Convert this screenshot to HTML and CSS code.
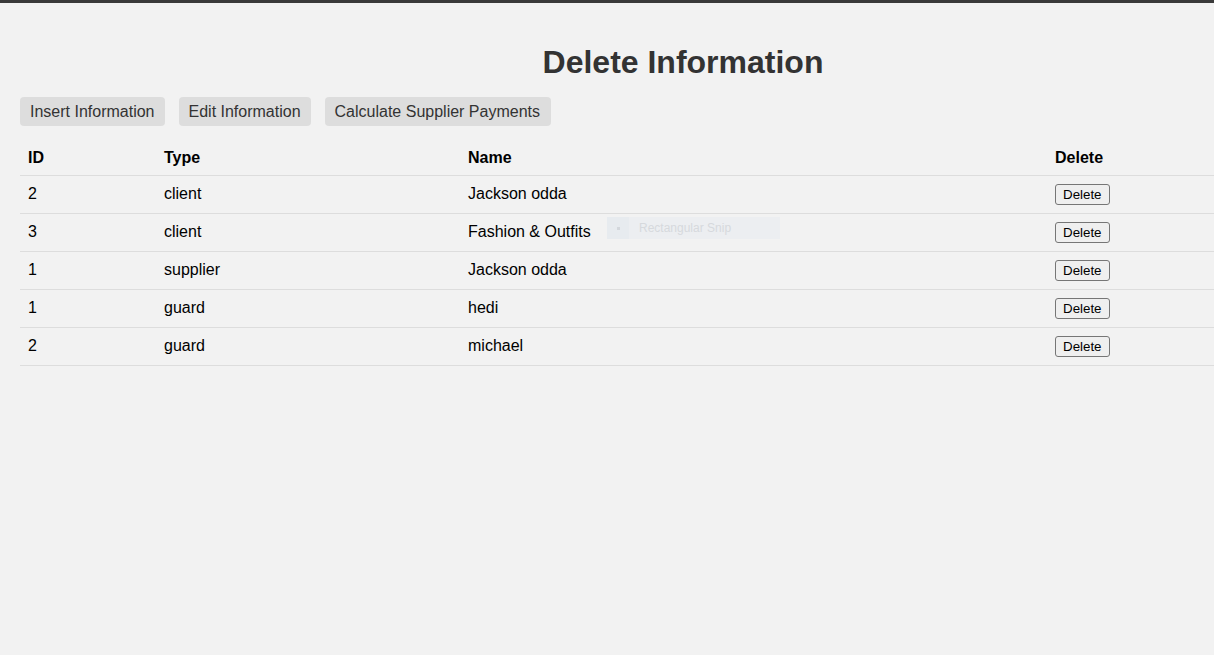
FILE: index.html
```html
<!DOCTYPE html>
<html lang="en">
<head>
<meta charset="utf-8">
<title>Delete Information</title>
<link rel="stylesheet" href="styles.css">
</head>
<body>
<div class="topbar"></div>
<div class="page">
  <h1 class="title">Delete Information</h1>
  <nav class="nav">
    <a class="nav-btn" href="#">Insert Information</a>
    <a class="nav-btn" href="#">Edit Information</a>
    <a class="nav-btn nav-wide" href="#">Calculate Supplier Payments</a>
  </nav>
  <table class="data">
    <colgroup>
      <col class="c-id">
      <col class="c-type">
      <col class="c-name">
      <col class="c-del">
    </colgroup>
    <thead>
      <tr><th>ID</th><th>Type</th><th>Name</th><th>Delete</th></tr>
    </thead>
    <tbody>
      <tr><td>2</td><td>client</td><td>Jackson odda</td><td class="act"><button class="del">Delete</button></td></tr>
      <tr><td>3</td><td>client</td><td>Fashion &amp; Outfits</td><td class="act"><button class="del">Delete</button></td></tr>
      <tr><td>1</td><td>supplier</td><td>Jackson odda</td><td class="act"><button class="del">Delete</button></td></tr>
      <tr><td>1</td><td>guard</td><td>hedi</td><td class="act"><button class="del">Delete</button></td></tr>
      <tr><td>2</td><td>guard</td><td>michael</td><td class="act"><button class="del">Delete</button></td></tr>
    </tbody>
  </table>
</div>
<div class="snip"><span class="snip-icon"><span class="snip-dot"></span></span><span class="snip-text">Rectangular Snip</span></div>
</body>
</html>
```
FILE: styles.css
```css
html, body {
  margin: 0;
  padding: 0;
  background: #f2f2f2;
  overflow: hidden;
}
body {
  font-family: "Liberation Sans", Arial, sans-serif;
  color: #000;
  position: relative;
  height: 655px;
}
.topbar {
  height: 3px;
  background: #3a3a3a;
}
.page {
  width: 1326px;
  padding: 20px 20px 0 20px;
}
.title {
  margin: 21px 0 16px 0;
  font-size: 32px;
  font-weight: bold;
  line-height: 37px;
  text-align: center;
  color: #333;
}
.nav {
  display: flex;
  gap: 14px;
  margin-bottom: 15px;
}
.nav-btn {
  display: block;
  background: #dddddd;
  color: #333;
  text-decoration: none;
  font-size: 16px;
  line-height: 19px;
  padding: 5px 10px;
  border-radius: 4px;
}
.nav-wide {
  padding-right: 11px;
}
.data {
  width: 1326px;
  border-collapse: collapse;
  table-layout: fixed;
}
.c-id { width: 136px; }
.c-type { width: 304px; }
.c-name { width: 587px; }
.c-del { width: 299px; }
.data th, .data td {
  text-align: left;
  padding: 8px;
  font-size: 16px;
  line-height: 18px;
  border-bottom: 1px solid #dddddd;
  vertical-align: middle;
}
.data td {
  vertical-align: top;
  padding-top: 9px;
}
.data td.act {
  padding-top: 8px;
}
.data th {
  font-weight: bold;
}
.del {
  font-family: "Liberation Sans", Arial, sans-serif;
  font-size: 13.333px;
  line-height: 15px;
  padding: 2px 7px;
  margin: 0;
  border: 1px solid #767676;
  border-radius: 3px;
  background: #efefef;
  color: #000;
  display: block;
}
.snip {
  position: absolute;
  left: 607px;
  top: 217px;
  width: 173px;
  height: 22px;
  background: #eceef1;
  display: flex;
  align-items: center;
  pointer-events: none;
}
.snip-icon {
  width: 22px;
  height: 22px;
  background: #e7ebef;
  display: flex;
  align-items: center;
  justify-content: center;
}
.snip-dot {
  width: 3px;
  height: 3px;
  background: #d3d7dc;
}
.snip-text {
  margin-left: 10px;
  font-size: 12px;
  color: #d6d9dd;
}
```
